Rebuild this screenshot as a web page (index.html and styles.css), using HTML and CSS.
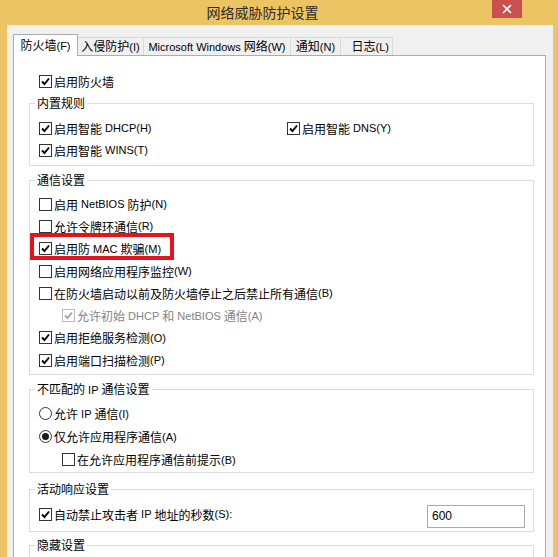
FILE: index.html
```html
<!DOCTYPE html>
<html>
<head>
<meta charset="utf-8">
<title>网络威胁防护设置</title>
<link rel="stylesheet" href="styles.css">
</head>
<body>
<div class="window">
  <div class="titlebar">
    <span class="title">网络威胁防护设置</span>
    <span class="close"><svg width="10" height="10" viewBox="0 0 10 10"><path d="M1 1L9 9M9 1L1 9" stroke="#fff" stroke-width="1.6"/></svg></span>
  </div>
  <div class="dialog">
    <div class="tabs">
      <div class="tab active w1">防火墙<span class="en">(F)</span></div>
      <div class="tab w2">入侵防护<span class="en">(I)</span></div>
      <div class="tab w3"><span class="en">Microsoft Windows </span>网络<span class="en">(W)</span></div>
      <div class="tab w4">通知<span class="en">(N)</span></div>
      <div class="tab w5">日志<span class="en">(L)</span></div>
    </div>
    <div class="panel">
      <div class="row first"><span class="cb"><svg class="tick" viewBox="0 0 11 11"><path d="M2 5.5L4.5 8L9 2.5"/></svg></span>启用防火墙</div>

      <fieldset class="group g1">
        <legend>内置规则</legend>
        <div class="cols">
          <div class="row"><span class="cb"><svg class="tick" viewBox="0 0 11 11"><path d="M2 5.5L4.5 8L9 2.5"/></svg></span>启用智能<span class="en">&nbsp;DHCP(H)</span></div>
          <div class="row"><span class="cb"><svg class="tick" viewBox="0 0 11 11"><path d="M2 5.5L4.5 8L9 2.5"/></svg></span>启用智能<span class="en">&nbsp;DNS(Y)</span></div>
          <div class="row"><span class="cb"><svg class="tick" viewBox="0 0 11 11"><path d="M2 5.5L4.5 8L9 2.5"/></svg></span>启用智能<span class="en">&nbsp;WINS(T)</span></div>
        </div>
      </fieldset>

      <fieldset class="group g2">
        <legend>通信设置</legend>
        <div class="row"><span class="cb"></span>启用<span class="en">&nbsp;NetBIOS&nbsp;</span>防护<span class="en">(N)</span></div>
        <div class="row"><span class="cb"></span>允许令牌环通信<span class="en">(R)</span></div>
        <div class="row marked"><span class="cb"><svg class="tick" viewBox="0 0 11 11"><path d="M2 5.5L4.5 8L9 2.5"/></svg></span>启用防<span class="en">&nbsp;MAC&nbsp;</span>欺骗<span class="en">(M)</span><span class="redbox"></span></div>
        <div class="row"><span class="cb"></span>启用网络应用程序监控<span class="en">(W)</span></div>
        <div class="row"><span class="cb"></span>在防火墙启动以前及防火墙停止之后禁止所有通信<span class="en">(B)</span></div>
        <div class="row sub disabled"><span class="cb"><svg class="tick" viewBox="0 0 11 11"><path d="M2 5.5L4.5 8L9 2.5"/></svg></span>允许初始<span class="en">&nbsp;DHCP&nbsp;</span>和<span class="en">&nbsp;NetBIOS&nbsp;</span>通信<span class="en">(A)</span></div>
        <div class="row"><span class="cb"><svg class="tick" viewBox="0 0 11 11"><path d="M2 5.5L4.5 8L9 2.5"/></svg></span>启用拒绝服务检测<span class="en">(O)</span></div>
        <div class="row"><span class="cb"><svg class="tick" viewBox="0 0 11 11"><path d="M2 5.5L4.5 8L9 2.5"/></svg></span>启用端口扫描检测<span class="en">(P)</span></div>
      </fieldset>

      <fieldset class="group g3">
        <legend>不匹配的<span class="en">&nbsp;IP&nbsp;</span>通信设置</legend>
        <div class="row"><span class="rb"></span>允许<span class="en">&nbsp;IP&nbsp;</span>通信<span class="en">(I)</span></div>
        <div class="row"><span class="rb on"></span>仅允许应用程序通信<span class="en">(A)</span></div>
        <div class="row sub"><span class="cb"></span>在允许应用程序通信前提示<span class="en">(B)</span></div>
      </fieldset>

      <fieldset class="group g4">
        <legend>活动响应设置</legend>
        <div class="row spread">
          <span class="label"><span class="cb"><svg class="tick" viewBox="0 0 11 11"><path d="M2 5.5L4.5 8L9 2.5"/></svg></span>自动禁止攻击者<span class="en">&nbsp;IP&nbsp;</span>地址的秒数<span class="en">(S):</span></span>
          <span class="field en">600</span>
        </div>
      </fieldset>

      <fieldset class="group g5">
        <legend>隐藏设置</legend>
      </fieldset>
    </div>
  </div>
</div>
</body>
</html>
```

FILE: styles.css
```css
body { margin: 0; font-family: "Noto Sans CJK SC", sans-serif; font-size: 12px; color: #000; }
.en { font-family: "Liberation Sans", "Noto Sans CJK SC", sans-serif; font-size: 11px; }

.window { width: 558px; height: 557px; background: #edc464; overflow: hidden; }

.titlebar { height: 25px; position: relative; }
.title { display: block; text-align: center; padding-right: 33px; font-size: 14px; line-height: 25px; color: #2a2a2a; }
.close { position: absolute; left: 492px; top: 0; width: 30px; height: 18px; background: #c9504f;
         display: flex; align-items: center; justify-content: center; }

.dialog { margin: 0 5px 0 7px; height: 532px; background: #f0f0f0; padding: 9px 7px 0 6px; box-sizing: border-box; }

.tabs { display: flex; align-items: flex-end; height: 21px; }
.tab { box-sizing: border-box; height: 18px; line-height: 16px; text-align: center; background: #f0f0f0;
       border: 1px solid #d9d9d9; border-bottom: none; margin-left: -1px; white-space: nowrap; }
.tab.active { height: 22px; line-height: 20px; background: #fff; border-color: #acacac; margin-left: 0;
              margin-bottom: -1px; position: relative; z-index: 1; }
.w1 { width: 65px; }
.w2 { width: 67px; }
.w3 { width: 148px; }
.w4 { width: 51px; }
.w5 { width: 53px; text-align: right; padding-right: 3px; }

.panel { background: #fff; border: 1px solid #acacac; height: 600px; padding: 14px 11px 0 15px; }

.row { display: flex; align-items: center; height: 22.3px; white-space: nowrap; position: relative; }
.row.first { padding-left: 10px; height: 22px; margin-bottom: 3px; }
.row.sub { padding-left: 23px; }
.row.disabled { color: #838383; }

.cb { box-sizing: border-box; width: 13px; height: 13px; border: 1px solid #333; background: #fff;
      margin-right: 2px; display: flex; align-items: center; justify-content: center; flex: none; }
.tick { width: 11px; height: 11px; fill: none; stroke: #000; stroke-width: 1.9; }
.disabled .cb { border-color: #bcbcbc; }
.disabled .tick { stroke: #a6a6a6; }

.rb { box-sizing: border-box; width: 13px; height: 13px; border: 1px solid #333; border-radius: 50%;
      background: #fff; margin-right: 2px; display: flex; align-items: center; justify-content: center; flex: none; }
.rb.on::after { content: ""; width: 7px; height: 7px; border-radius: 50%; background: #1b1b1b; }

.group { margin: 6px 0 0; border: 1px solid #dcdcdc; padding: 5px 8px 3px 9px; min-width: 0; }
.group legend { padding: 0 2px; margin-left: -4px; line-height: 16px; }
.g1 { margin-top: 0; padding-top: 6px; padding-bottom: 4px; }
.g1 .row { height: 22px; }
.g3 .row { height: 23px; }
.g3 { padding-top: 4px; padding-bottom: 1px; }
.g4 { margin-top: 8px; padding-top: 6px; padding-bottom: 6px; }
.g5 { margin-top: 5px; height: 80px; }

.cols { display: grid; grid-template-columns: 248px 1fr; }

.spread { justify-content: space-between; height: 22px; }
.label { display: flex; align-items: center; }
.field { align-self: flex-start; margin-top: 2px; box-sizing: border-box; width: 98px; height: 23px;
         border: 1px solid #ababab; line-height: 21px; padding-left: 4px; font-size: 12px; }

.redbox { position: absolute; left: -9px; top: -5px; width: 144px; height: 27px; box-sizing: border-box;
          border: 4px solid #e3141b; }
```
